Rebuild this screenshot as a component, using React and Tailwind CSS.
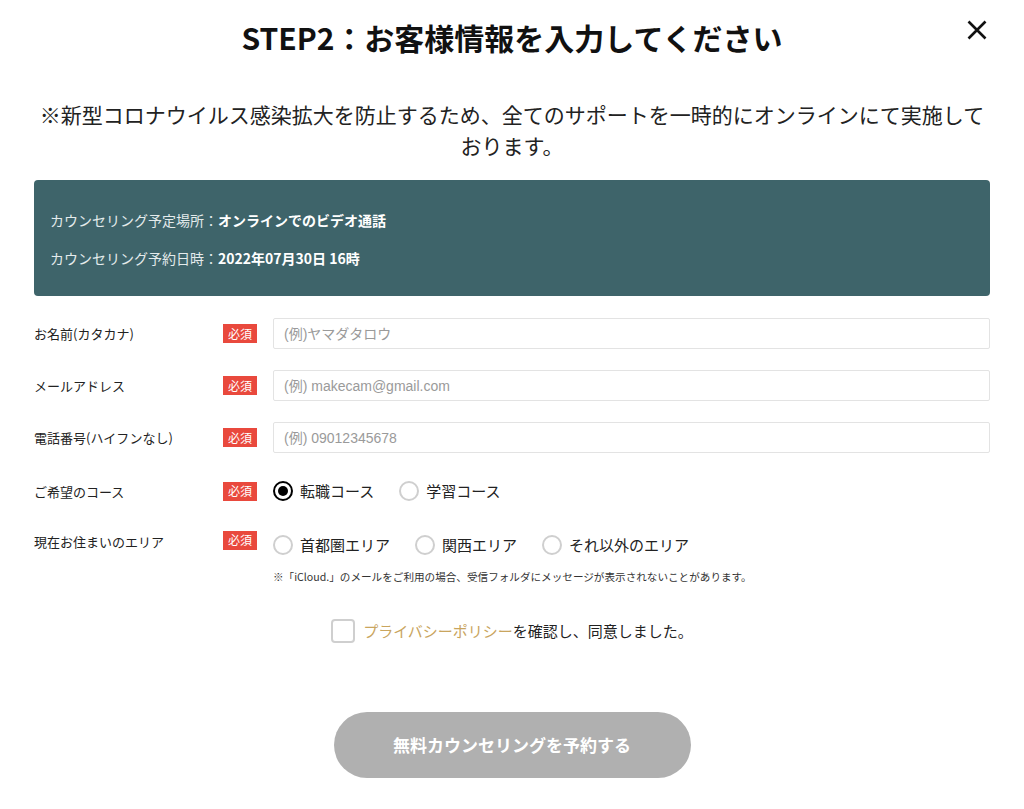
import { useState } from 'react';

const font = { fontFamily: '"Noto Sans CJK JP", "Noto Sans", sans-serif' };

function Badge() {
  return (
    <span className="flex h-[19px] w-[34px] shrink-0 items-center justify-center bg-[#e9493d] text-[12px] leading-none text-white">
      必須
    </span>
  );
}

function Radio({ checked, label, onClick }) {
  return (
    <button type="button" onClick={onClick} className="flex items-center gap-[7px]">
      <span
        className={
          checked
            ? 'flex h-[20px] w-[20px] items-center justify-center rounded-full border-2 border-black'
            : 'h-[20px] w-[20px] rounded-full border-2 border-[#cfcfcf]'
        }
      >
        {checked && <span className="h-[10px] w-[10px] rounded-full bg-black" />}
      </span>
      <span className="text-[15px] text-[#222]">{label}</span>
    </button>
  );
}

function TextRow({ label, placeholder }) {
  return (
    <div className="flex items-center">
      <div className="w-[189px] text-[13px] text-[#222]">{label}</div>
      <Badge />
      <input
        placeholder={placeholder}
        className="ml-[16px] h-[31px] flex-1 rounded-[2px] border border-[#e3e3e3] px-[10px] text-[14px] text-[#333] placeholder:text-[#9a9a9a] focus:outline-none"
        style={{ fontFamily: '"Liberation Sans", "Noto Sans CJK JP", sans-serif' }}
      />
    </div>
  );
}

export default function App() {
  const [course, setCourse] = useState('job');
  const [area, setArea] = useState(null);
  const [agree, setAgree] = useState(false);

  return (
    <div className="relative min-h-[809px] bg-white px-[34px]" style={font}>
      {/* Close */}
      <button className="absolute right-[37px] top-[20px]" aria-label="close">
        <svg width="20" height="20" viewBox="0 0 20 20">
          <path d="M1.5 1.5 L18.5 18.5 M18.5 1.5 L1.5 18.5" stroke="#111" strokeWidth="2.6" />
        </svg>
      </button>

      {/* Title */}
      <h1 className="pt-[16px] text-center text-[30px] font-bold leading-[43px] text-[#111]">
        STEP2：お客様情報を入力してください
      </h1>

      {/* Notice */}
      <p className="mt-[40px] text-center text-[21px] leading-[31px] text-[#222]">
        ※新型コロナウイルス感染拡大を防止するため、全てのサポートを一時的にオンラインにて実施しております。
      </p>

      {/* Reservation summary */}
      <div className="mt-[19px] flex flex-col gap-[18px] rounded-[4px] bg-[#3e646a] px-[16px] pb-[28px] pt-[30px] text-[14px] leading-[20px]">
        <div className="text-[#e4ebec]">
          カウンセリング予定場所：<span className="font-bold text-white">オンラインでのビデオ通話</span>
        </div>
        <div className="text-[#e4ebec]">
          カウンセリング予約日時：<span className="font-bold text-white">2022年07月30日 16時</span>
        </div>
      </div>

      {/* Form */}
      <div className="mt-[22px] flex flex-col gap-[21px]">
        <TextRow label="お名前(カタカナ)" placeholder="(例)ヤマダタロウ" />
        <TextRow label="メールアドレス" placeholder="(例) makecam@gmail.com" />
        <TextRow label="電話番号(ハイフンなし)" placeholder="(例) 09012345678" />
      </div>

      <div className="mt-[27px] flex items-center">
        <div className="w-[189px] text-[13px] text-[#222]">ご希望のコース</div>
        <Badge />
        <div className="ml-[16px] flex gap-[25px]">
          <Radio checked={course === 'job'} label="転職コース" onClick={() => setCourse('job')} />
          <Radio checked={course === 'study'} label="学習コース" onClick={() => setCourse('study')} />
        </div>
      </div>

      <div className="mt-[28px] flex items-start">
        <div className="w-[189px] pt-[1px] text-[13px] text-[#222]">現在お住まいのエリア</div>
        <Badge />
        <div className="ml-[16px] flex flex-col">
          <div className="mt-[3px] flex gap-[25px]">
            <Radio checked={area === 'tokyo'} label="首都圏エリア" onClick={() => setArea('tokyo')} />
            <Radio checked={area === 'kansai'} label="関西エリア" onClick={() => setArea('kansai')} />
            <Radio checked={area === 'other'} label="それ以外のエリア" onClick={() => setArea('other')} />
          </div>
          <p className="mt-[14px] text-[10.6px] leading-[14px] text-[#333]">
            ※「iCloud.」のメールをご利用の場合、受信フォルダにメッセージが表示されないことがあります。
          </p>
        </div>
      </div>

      {/* Agreement */}
      <div className="mt-[35px] flex justify-center">
        <button type="button" onClick={() => setAgree(!agree)} className="flex items-center gap-[8px]">
          <span className="flex h-[24px] w-[24px] items-center justify-center rounded-[4px] border-2 border-[#cfcfcf]">
            {agree && <span className="text-[14px] leading-none">✓</span>}
          </span>
          <span className="text-[15px] text-[#222]">
            <span className="text-[#c9a55e]">プライバシーポリシー</span>を確認し、同意しました。
          </span>
        </button>
      </div>

      {/* Submit */}
      <div className="mt-[69px] flex justify-center">
        <button
          disabled={!agree}
          className="h-[66px] w-[357px] rounded-full bg-[#b0b0b0] text-[17px] font-bold text-white"
        >
          無料カウンセリングを予約する
        </button>
      </div>
    </div>
  );
}
